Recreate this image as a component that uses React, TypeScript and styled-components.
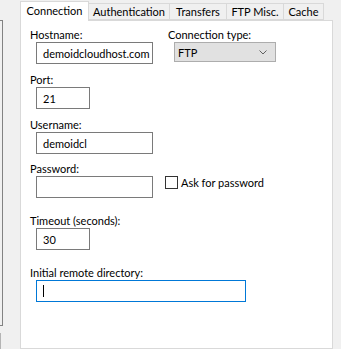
import React from 'react'
import styled, { createGlobalStyle } from 'styled-components'

const GlobalStyle = createGlobalStyle`
  html, body {
    margin: 0;
    padding: 0;
    background: #f0f0f0;
    overflow: hidden;
  }
  body {
    font-family: Lato, "Liberation Sans", sans-serif;
    font-size: 11px;
    color: #000;
  }
`

const Screen = styled.div`
  display: flex;
  width: 341px;
  height: 349px;
`

const SideColumn = styled.div`
  display: flex;
  flex-direction: column;
  width: 3px;
  margin-right: 17px;
`

const SideTree = styled.div`
  margin-top: 20px;
  height: 304px;
  border-top: 1px solid #828282;
  border-bottom: 1px solid #828282;
  border-right: 1px solid #828282;
`

const SideBelow = styled.div`
  margin-top: 7px;
  flex: 1;
  width: 1px;
  background: #b4b4b4;
`

const Notebook = styled.div`
  display: flex;
  flex-direction: column;
  width: 313px;
`

const TabStrip = styled.div`
  display: flex;
  align-items: flex-end;
  height: 21px;
  position: relative;
  z-index: 1;
`

const Tab = styled.div<{ $active?: boolean; $w: number }>`
  box-sizing: border-box;
  width: ${p => p.$w}px;
  height: ${p => (p.$active ? 20 : 17)}px;
  border: 1px solid #d9d9d9;
  border-left-width: ${p => (p.$active ? 1 : 0)}px;
  border-bottom: ${p => (p.$active ? 'none' : '1px solid #d9d9d9')};
  background: ${p => (p.$active ? '#fff' : '#f0f0f0')};
  margin-bottom: ${p => (p.$active ? -1 : 0)}px;
  display: flex;
  align-items: center;
  justify-content: center;
  padding-bottom: ${p => (p.$active ? 2 : 0)}px;
  white-space: nowrap;
`

const Panel = styled.div`
  box-sizing: border-box;
  height: 340px;
  background: #fff;
  border: 1px solid #d9d9d9;
  padding: 7px 0 0 9px;
  display: flex;
  flex-direction: column;
`

const Row = styled.div<{ $top?: number }>`
  display: flex;
  align-items: flex-start;
  margin-top: ${p => p.$top ?? 0}px;
`

const Field = styled.div<{ $w?: number }>`
  display: flex;
  flex-direction: column;
  width: ${p => (p.$w ? `${p.$w}px` : 'auto')};
`

const Label = styled.div`
  line-height: 14px;
  height: 14px;
  white-space: nowrap;
`

const TextBox = styled.div<{ $w: number; $focus?: boolean }>`
  box-sizing: border-box;
  width: ${p => p.$w}px;
  height: 22px;
  margin-left: 6px;
  border: 1px solid ${p => (p.$focus ? '#0078d7' : '#7a7a7a')};
  background: #fff;
  display: flex;
  align-items: center;
  padding-left: 6px;
  white-space: nowrap;
`

const Caret = styled.span`
  display: block;
  width: 1px;
  height: 12px;
  background: #000;
`

const Select = styled.div`
  box-sizing: border-box;
  width: 102px;
  height: 20px;
  margin-left: 6px;
  border: 1px solid #adadad;
  background: #e1e1e1;
  display: flex;
  align-items: center;
  justify-content: space-between;
  padding: 0 8px 0 3px;
`

const CheckRow = styled.label`
  display: flex;
  align-items: center;
  margin-left: 12px;
  height: 13px;
  gap: 3px;
  white-space: nowrap;
`

const CheckBox = styled.span`
  box-sizing: border-box;
  width: 13px;
  height: 13px;
  border: 1px solid #333;
  background: #fff;
`

const tabs = [
  { name: 'Connection', w: 69, active: true },
  { name: 'Authentication', w: 81 },
  { name: 'Transfers', w: 57 },
  { name: 'FTP Misc.', w: 57 },
  { name: 'Cache', w: 40 },
]

export default function App() {
  return (
    <>
      <GlobalStyle />
      <Screen>
        <SideColumn>
          <SideTree />
          <SideBelow />
        </SideColumn>
        <Notebook>
          <TabStrip>
            {tabs.map(t => (
              <Tab key={t.name} $active={t.active} $w={t.w}>
                {t.name}
              </Tab>
            ))}
          </TabStrip>
          <Panel>
            <Row>
              <Field $w={138}>
                <Label>Hostname:</Label>
                <TextBox $w={117}>demoidcloudhost.com</TextBox>
              </Field>
              <Field>
                <Label>Connection type:</Label>
                <Select>
                  <span>FTP</span>
                  <svg width="8" height="5" viewBox="0 0 8 5">
                    <polyline points="0.5,0.5 4,4 7.5,0.5" fill="none" stroke="#606060" strokeWidth="1" />
                  </svg>
                </Select>
              </Field>
            </Row>
            <Row $top={9}>
              <Field>
                <Label>Port:</Label>
                <TextBox $w={54}>21</TextBox>
              </Field>
            </Row>
            <Row $top={9}>
              <Field>
                <Label>Username:</Label>
                <TextBox $w={117}>demoidcl</TextBox>
              </Field>
            </Row>
            <Row $top={8}>
              <Field>
                <Label>Password:</Label>
                <Row>
                  <TextBox $w={117} />
                  <CheckRow>
                    <CheckBox />
                    Ask for password
                  </CheckRow>
                </Row>
              </Field>
            </Row>
            <Row $top={16}>
              <Field>
                <Label>Timeout (seconds):</Label>
                <TextBox $w={54}>30</TextBox>
              </Field>
            </Row>
            <Row $top={16}>
              <Field>
                <Label>Initial remote directory:</Label>
                <TextBox $w={210} $focus>
                  <Caret />
                </TextBox>
              </Field>
            </Row>
          </Panel>
        </Notebook>
      </Screen>
    </>
  )
}
